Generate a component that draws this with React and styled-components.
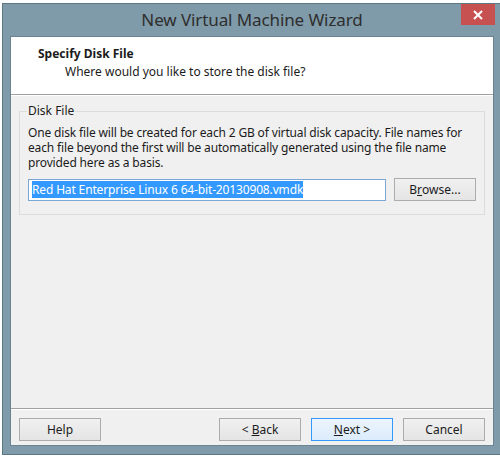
import React from 'react'
import styled, { createGlobalStyle } from 'styled-components'

const Global = createGlobalStyle`
  html, body {
    margin: 0;
    padding: 0;
    background: #ffffff;
    width: 500px;
    height: 459px;
    overflow: hidden;
  }
  body {
    font-family: "Noto Sans", "Open Sans", sans-serif;
    font-size: 12px;
    color: #1b1b1b;
  }
`

const Desk = styled.div`
  width: 500px;
  height: 459px;
  padding: 3px 0 0 2px;
  box-sizing: border-box;
  background: #ffffff;
`

const Window = styled.div`
  width: 498px;
  height: 452px;
  box-sizing: border-box;
  background: #7f9aa9;
  border: 1px solid #5f7683;
  border-right: none;
  padding: 0 6px 8px 7px;
  display: flex;
  flex-direction: column;
`

const TitleBar = styled.div`
  height: 32px;
  display: grid;
  grid-template-columns: 1fr auto 1fr;
  align-items: center;
`

const Title = styled.div`
  grid-column: 2;
  font-size: 17px;
  color: #2e2e2e;
  margin-top: -2px;
  letter-spacing: -0.1px;
`

const Close = styled.div`
  grid-column: 3;
  justify-self: end;
  align-self: start;
  width: 34px;
  height: 21px;
  margin-right: -1px;
  background: #c75050;
  display: flex;
  align-items: center;
  justify-content: center;
`

const Client = styled.div`
  flex: 1;
  background: #f0f0f0;
  border: 1px solid #6c8491;
  display: flex;
  flex-direction: column;
`

const Header = styled.div`
  height: 48px;
  background: #ffffff;
  border-bottom: 1px solid #a0a0a0;
  padding: 9px 0 0 27px;
  box-sizing: content-box;
`

const Heading = styled.div`
  font-weight: bold;
  font-size: 12px;
  line-height: 16px;
`

const Sub = styled.div`
  margin-top: 2px;
  padding-left: 27px;
  line-height: 16px;
`

const Body = styled.div`
  flex: 1;
  padding: 8px 9px 0 8px;
  border-top: 1px solid #ffffff;
`

const Group = styled.fieldset`
  margin: 0;
  border: 1px solid #dcdcdc;
  padding: 7px 8px 13px 8px;
`

const Legend = styled.legend`
  padding: 0 1px;
  margin-left: -1px;
  line-height: 14px;
`

const Para = styled.p`
  margin: 0;
  line-height: 15px;
  letter-spacing: -0.15px;
`

const FileRow = styled.div`
  display: flex;
  align-items: center;
  gap: 8px;
  margin-top: 8px;
`

const Field = styled.div`
  width: 358px;
  height: 22px;
  box-sizing: border-box;
  background: #ffffff;
  border: 1px solid #7aa7d6;
  display: flex;
  align-items: center;
  padding-left: 3px;
`

const Selected = styled.span`
  background: #3399ff;
  color: #ffffff;
  line-height: 17px;
  letter-spacing: -0.15px;
  white-space: nowrap;
`

const Button = styled.div`
  width: 82px;
  height: 23px;
  box-sizing: border-box;
  display: flex;
  align-items: center;
  justify-content: center;
  white-space: pre;
  border: 1px solid ${p => (p.$primary ? '#3399ff' : '#acacac')};
  background: ${p =>
    p.$primary
      ? 'linear-gradient(#ecf4fc, #dcecfc)'
      : 'linear-gradient(#f0f0f0, #e5e5e5)'};
  color: #1b1b1b;
  u { text-decoration: underline; }
`

const Footer = styled.div`
  border-top: 1px solid #a0a0a0;
  box-shadow: inset 0 1px 0 #ffffff;
  height: 37px;
  padding: 9px 8px 0 8px;
  box-sizing: border-box;
  display: flex;
  gap: 10px;
`

const Spring = styled.div`
  flex: 1;
`

export default function App() {
  return (
    <Desk>
      <Global />
      <Window>
        <TitleBar>
          <Title>New Virtual Machine Wizard</Title>
          <Close>
            <svg width="10" height="10" viewBox="0 0 10 10">
              <path d="M1 1 L9 9 M9 1 L1 9" stroke="#ffffff" strokeWidth="2" />
            </svg>
          </Close>
        </TitleBar>
        <Client>
          <Header>
            <Heading>Specify Disk File</Heading>
            <Sub>Where would you like to store the disk file?</Sub>
          </Header>
          <Body>
            <Group>
              <Legend>Disk File</Legend>
              <Para>
                One disk file will be created for each 2 GB of virtual disk capacity. File names for
                each file beyond the first will be automatically generated using the file name
                provided here as a basis.
              </Para>
              <FileRow>
                <Field>
                  <Selected>Red Hat Enterprise Linux 6 64-bit-20130908.vmdk</Selected>
                </Field>
                <Button>B<u>r</u>owse...</Button>
              </FileRow>
            </Group>
          </Body>
          <Footer>
            <Button>Help</Button>
            <Spring />
            <Button>{'< '}<u>B</u>ack</Button>
            <Button $primary><u>N</u>ext{' >'}</Button>
            <Button>Cancel</Button>
          </Footer>
        </Client>
      </Window>
    </Desk>
  )
}
